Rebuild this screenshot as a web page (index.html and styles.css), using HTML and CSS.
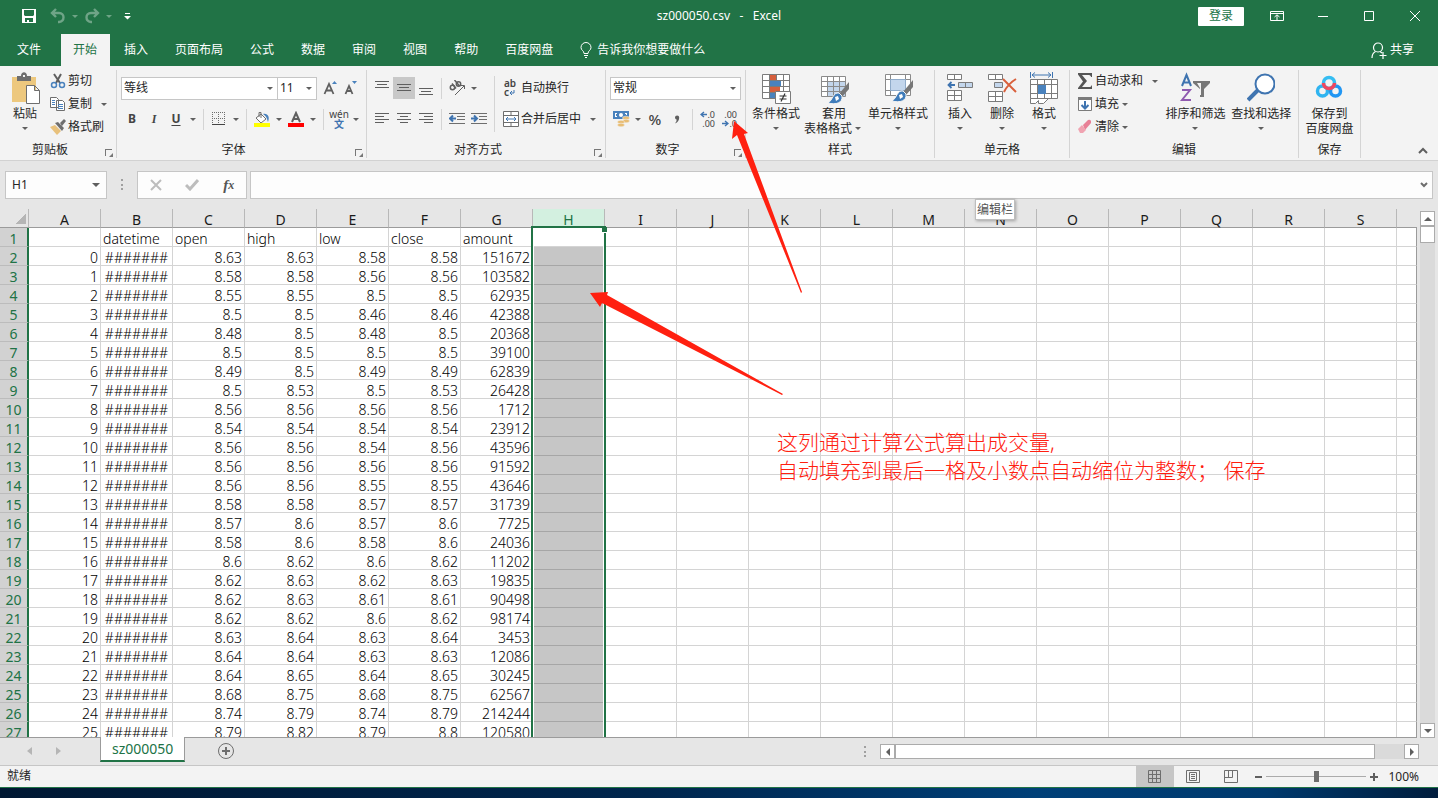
FILE: index.html
```html
<!DOCTYPE html>
<html lang="zh-CN">

  <head>
    <meta charset="UTF-8">
    <meta name="viewport" content="width=device-width, initial-scale=1.0">
    <title>sz000050.csv - Excel</title>
    <link rel="stylesheet" href="styles.css">
  </head>

  <body>

    <header class="titlebar">
      <div class="quick">
        <button class="quick__btn" aria-label="保存"><svg width="16" height="16" viewBox="0 0 16 16"><path fill="#fff" fill-rule="evenodd" d="M1 1h14v14H1zM3 2v5l1 1h8l1-1V2zM4 10v4h2v-2h2v2h4v-4z"/></svg></button>
        <button class="quick__btn dim" aria-label="撤消"><svg width="16" height="16" viewBox="0 0 16 16" fill="none" stroke="#fff" stroke-width="2.400"><path d="M6 1L2 5l4 4M2 5h7c6 0 6 8 0 9H8"/></svg></button>
        <i class="caret light dim"></i>
        <button class="quick__btn dim" aria-label="恢复"><svg width="16" height="16" viewBox="0 0 16 16" fill="none" stroke="#fff" stroke-width="2.400"><path d="M10 1l4 4-4 4M14 5H7c-6 0-6 8 0 9h1"/></svg></button>
        <i class="caret light dim"></i>
        <button class="quick__more" aria-label="自定义快速访问工具栏"><svg width="7" height="7" viewBox="0 0 7 7" fill="#fff"><path d="M1 0h5v1H1zM0 3h7L3.500 6.500z"/></svg></button>
      </div>
      <h1 class="titlebar__name">sz000050.csv&nbsp;&nbsp; -&nbsp;&nbsp; Excel</h1>
      <div class="window">
        <button class="login">登录</button>
        <button class="window__btn" aria-label="功能区显示选项"><svg width="14" height="12" viewBox="0 0 14 12" fill="none" stroke="#fff"><path d="M.5 1.500h13v9H.5zM.5 3.500h13M7 10V5M4.500 7L7 4.800 9.500 7"/></svg></button>
        <button class="window__btn" aria-label="最小化"><svg width="12" height="12" stroke="#fff"><path d="M1 6.500h10"/></svg></button>
        <button class="window__btn" aria-label="最大化"><svg width="12" height="12" fill="none" stroke="#fff"><path d="M1.500 1.500h9v9h-9z"/></svg></button>
        <button class="window__btn" aria-label="关闭"><svg width="12" height="12" stroke="#fff"><path d="M1 1l10 10M11 1L1 11"/></svg></button>
      </div>
    </header>

    <nav class="tabs">
      <button class="tab tab--file">文件</button>
      <button class="tab tab--active">开始</button>
      <button class="tab">插入</button>
      <button class="tab">页面布局</button>
      <button class="tab">公式</button>
      <button class="tab">数据</button>
      <button class="tab">审阅</button>
      <button class="tab">视图</button>
      <button class="tab">帮助</button>
      <button class="tab">百度网盘</button>
      <button class="tab tab--tell"><svg width="12" height="16" viewBox="0 0 12 16" fill="none" stroke="#fff"><path d="M4 11.500c0-3-3-3-3-6a5 5 0 0 1 10 0c0 3-3 3-3 6zM4 13.500h4M5 15.500h2"/></svg>告诉我你想要做什么</button>
      <button class="tab tab--share"><svg width="16" height="17" viewBox="0 0 16 17" fill="none" stroke="#fff" stroke-width="1.200"><circle cx="7" cy="5.500" r="4.500"/><path d="M4.500 9.500C2.500 10.500 1 13 1 16M9 9.500l2 1.500M12 10v7M8.500 13.500h7"/></svg>共享</button>
    </nav>

    <section class="ribbon">

      <div class="group group--clip">
        <div class="group__body">
          <button class="large large--paste">
            <svg width="30" height="32" viewBox="0 0 30 32"><path fill="#edc87e" d="M2 5h24v25H2z"/><path fill="#6e6e6e" d="M7 4h4c0-5 6-5 6 0h4v5H7z"/><path fill="#f3f3f3" d="M13 3h2v2h-2z"/><path fill="#fff" stroke="#6e6e6e" d="M16.500 13.500h8l5 5v13h-13zM24.500 13.500v5h5"/></svg>
            <span>粘贴</span><i class="caret"></i>
          </button>
          <div class="smalls">
            <button class="small"><svg width="16" height="16" viewBox="0 0 16 16" fill="none"><path stroke="#5f5f5f" stroke-width="2" d="M4 1l6 9M11 1L6 10"/><circle cx="4" cy="12" r="2.500" stroke="#4a82bd" stroke-width="1.500"/><circle cx="12" cy="12" r="2.500" stroke="#4a82bd" stroke-width="1.500"/></svg>剪切</button>
            <button class="small"><svg width="16" height="16" viewBox="0 0 16 16" fill="#fff" stroke="#6e6e6e"><path d="M.5 1.500h6l2 2v8h-8zM6.500 4.500h6l2 2v8h-8z"/><path stroke="#4a82bd" d="M2 4.500h3M2 6.500h3M2 8.500h3M8 8.500h5M8 10.500h5M8 12.500h5"/></svg>复制<i class="caret caret--far"></i></button>
            <button class="small"><svg width="16" height="16" viewBox="0 0 16 16"><path fill="#e8c17c" d="M0 8l5-2 6 6-4 4z"/><path fill="#6e6e6e" d="M5 4l3-1 6 6-2 3zM10 4l4-4 2 2-4 5z"/></svg>格式刷</button>
          </div>
        </div>
        <div class="group__name">剪贴板</div>
        <button class="launcher" aria-label="剪贴板设置"></button>
      </div>

      <div class="group group--font">
        <div class="rows">
          <div class="row">
            <label class="combo combo--font"><select aria-label="字体"><option>等线</option></select></label>
            <label class="combo combo--size"><select aria-label="字号"><option>11</option></select></label>
            <button class="tool grow" aria-label="增大字号"><svg width="16" height="16" viewBox="0 0 16 16"><path fill="none" stroke="#5f5f5f" stroke-width="1.800" d="M1.500 14L6 4l4.500 10M3 10.500h6"/><path fill="#4a82bd" d="M9 4l2.500-3L14 4z"/></svg></button>
            <button class="tool grow" aria-label="减小字号"><svg width="16" height="16" viewBox="0 0 16 16"><path fill="none" stroke="#5f5f5f" stroke-width="1.800" d="M2.500 14L6 6l3.500 8M3.500 11h5"/><path fill="#4a82bd" d="M9 1l2.500 3L14 1z"/></svg></button>
          </div>
          <div class="row">
            <button class="tool bold">B</button>
            <button class="tool italic">I</button>
            <button class="tool under">U</button>
            <i class="caret"></i>
            <i class="sep"></i>
            <button class="tool" aria-label="边框"><svg width="14" height="14" fill="none" stroke="#6e6e6e"><path stroke-dasharray="1 1" d="M0 .5h14M0 6.500h14M.5 0v13M6.500 0v13M12.500 0v13"/><path stroke="#444" d="M0 12.500h13"/></svg></button>
            <i class="caret"></i>
            <i class="sep"></i>
            <button class="tool" aria-label="填充颜色"><svg width="16" height="16" viewBox="0 0 16 16"><path fill="#fff" stroke="#6e6e6e" d="M2 7l5-4 5 5-5 4z"/><path fill="none" stroke="#6e6e6e" d="M5 6V1.500h2V7"/><path fill="#4a82bd" d="M9 3c5-1 7 3 5 8-1-3-1-5-5-8z"/><path fill="#ff0" d="M0 12h16v4H0z"/></svg></button>
            <i class="caret"></i>
            <button class="tool" aria-label="字体颜色"><svg width="16" height="16" viewBox="0 0 16 16"><path fill="none" stroke="#5f5f5f" stroke-width="2" d="M4 11L8 2l4 9M5 8h6"/><path fill="#f00" d="M0 12h16v4H0z"/></svg></button>
            <i class="caret"></i>
            <i class="sep"></i>
            <button class="tool pinyin"><span>wén</span><b>文</b></button>
            <i class="caret"></i>
          </div>
        </div>
        <div class="group__name">字体</div>
        <button class="launcher" aria-label="字体设置"></button>
      </div>

      <div class="group group--align">
        <div class="group__body">
          <div class="rows">
            <div class="row">
              <button class="tool" aria-label="顶端对齐"><svg width="14" height="14" stroke="#5f5f5f"><path d="M0 .5h14M2 3.500h10M0 6.500h14"/></svg></button>
              <button class="tool tool--on" aria-label="垂直居中"><svg width="14" height="14" stroke="#5f5f5f"><path d="M0 3.500h14M2 6.500h10M0 9.500h14"/></svg></button>
              <button class="tool" aria-label="底端对齐"><svg width="14" height="14" stroke="#5f5f5f"><path d="M0 7.500h14M2 10.500h10M0 13.500h14"/></svg></button>
              <i class="sep"></i>
              <button class="tool" aria-label="方向"><svg width="17" height="16" viewBox="0 0 17 16" fill="none" stroke="#5f5f5f" stroke-width="1.500"><circle cx="3.500" cy="7.500" r="2.200"/><path d="M3 3.500l4 5M5.500 0l5 6"/><circle cx="9.500" cy="4" r="2.200"/><path stroke-width="1" d="M6 15l9-9M12 5.500h3.500V9"/></svg></button>
              <i class="caret"></i>
            </div>
            <div class="row">
              <button class="tool" aria-label="左对齐"><svg width="14" height="14" stroke="#5f5f5f"><path d="M0 1.500h14M0 4.500h9M0 7.500h14M0 10.500h9"/></svg></button>
              <button class="tool" aria-label="居中"><svg width="14" height="14" stroke="#5f5f5f"><path d="M0 1.500h14M3 4.500h8M0 7.500h14M3 10.500h8"/></svg></button>
              <button class="tool" aria-label="右对齐"><svg width="14" height="14" stroke="#5f5f5f"><path d="M0 1.500h14M5 4.500h9M0 7.500h14M5 10.500h9"/></svg></button>
              <i class="sep"></i>
              <button class="tool" aria-label="减少缩进量"><svg width="16" height="14" stroke="#6e6e6e"><path d="M0 1.500h16M8 4.500h8M8 7.500h8M0 11.500h16"/><path fill="none" stroke="#3f74b0" stroke-width="2" d="M7 6.500H1M4 3.500l-3 3 3 3"/></svg></button>
              <button class="tool" aria-label="增加缩进量"><svg width="16" height="14" stroke="#6e6e6e"><path d="M0 1.500h16M8 4.500h8M8 7.500h8M0 11.500h16"/><path fill="none" stroke="#3f74b0" stroke-width="2" d="M0 6.500h6M3 3.500l3 3-3 3"/></svg></button>
            </div>
          </div>
          <i class="sep sep--tall"></i>
          <div class="rows">
            <div class="row">
              <button class="wide"><span class="wrapicon">ab<br>c<svg width="6" height="6" fill="none" stroke="#3f74b0"><path d="M5 0v3H1M3 1L1 3l2 2"/></svg></span>自动换行</button>
            </div>
            <div class="row">
              <button class="wide"><svg width="16" height="16" viewBox="0 0 16 16" fill="#fff" stroke="#6e6e6e"><path d="M.5.5h15v15H.5zM.5 4.500h15M.5 11.500h15M8 .5v4M8 11.500v4"/><path stroke="#3f74b0" fill="none" d="M3 8h10M5 6L3 8l2 2M11 6l2 2-2 2"/></svg>合并后居中</button>
              <i class="caret caret--far"></i>
            </div>
          </div>
        </div>
        <div class="group__name">对齐方式</div>
        <button class="launcher" aria-label="对齐设置"></button>
      </div>

      <div class="group group--number">
        <div class="rows">
          <div class="row">
            <label class="combo combo--format"><select aria-label="数字格式"><option>常规</option></select></label>
          </div>
          <div class="row">
            <button class="tool" aria-label="会计数字格式"><svg width="17" height="16" viewBox="0 0 17 16"><path fill="#4a82bd" d="M0 0h16v8H0z"/><path fill="#fff" d="M2 2h2v1H3v2h1v1H2zM14 2h-2v1h1v1h1z"/><circle cx="8" cy="4" r="2" fill="#fff"/><g fill="#e8bd74" stroke="#f3f3f3" stroke-width=".5"><ellipse cx="13" cy="7" rx="3.500" ry="1.800"/><ellipse cx="13" cy="10" rx="3.500" ry="1.800"/><ellipse cx="8" cy="11" rx="3.500" ry="1.800"/><ellipse cx="8" cy="14" rx="3.500" ry="1.800"/></g></svg></button>
            <i class="caret"></i>
            <button class="tool percent">%</button>
            <button class="tool" aria-label="千位分隔样式"><svg width="6" height="9" viewBox="0 0 6 9"><path fill="#5f5f5f" d="M1 2.500a2 2 0 0 1 4.200 0C5.200 5 4 7.500 1 8.500c1-1.200 1.600-2.400 1.600-4C1.600 4.400 1 3.500 1 2.500z"/></svg></button>
            <i class="sep"></i>
            <button class="tool decimals"><span><svg width="7" height="7" fill="none" stroke="#3f74b0" stroke-width="1.400"><path d="M7 3.500H1M4 1L1 3.500 4 6"/></svg>.0</span><span>.00</span></button>
            <button class="tool decimals"><span>.00</span><span><svg width="7" height="7" fill="none" stroke="#3f74b0" stroke-width="1.400"><path d="M0 3.500h6M3 1l3 2.500L3 6"/></svg>.0</span></button>
          </div>
        </div>
        <div class="group__name">数字</div>
        <button class="launcher" aria-label="数字设置"></button>
      </div>

      <div class="group group--styles">
        <div class="group__body">
          <button class="large">
            <svg width="30" height="32" viewBox="0 0 30 32"><path fill="#fff" stroke="#7b7b7b" d="M1.500 2.500h27v24h-27zM1.500 8.500h27M1.500 14.500h27M1.500 20.500h27M8.500 2.500v24M15.500 2.500v24M22.500 2.500v24"/><path fill="#d65f3c" d="M9 3h6v5H9zM9 15h10v5H9z"/><path fill="#4a82bd" d="M9 9h11v5H9zM9 21h5v5H9z"/><path fill="#fff" stroke="#7b7b7b" d="M14.500 19.500h15v12h-15z"/><path stroke="#333" stroke-width="1.200" d="M18.500 24h7M18.500 27h7M24 21.500l-4 8"/></svg>
            <span>条件格式</span><i class="caret"></i>
          </button>
          <button class="large large--two">
            <svg width="30" height="32" viewBox="0 0 30 32"><path fill="#fff" stroke="#8a8a8a" d="M2.500 4.500h24v20h-24z"/><path fill="#c3d6ec" d="M9 10h17v14H9z"/><path fill="none" stroke="#8a8a8a" d="M2.500 9.500h24M2.500 14.500h24M2.500 19.500h24M8.500 4.500v20M14.500 4.500v20M20.500 4.500v20"/><path fill="#777" d="M30 10v7l-7 8-3-3z"/><path fill="#3f7cba" stroke="#f3f3f3" d="M20 21c-6-1-6 7-11 10 8 2 15 0 14-7z"/><path fill="#fff" d="M16 25l3-1 1 3-3 2z"/></svg>
            <span>套用<br>表格格式<i class="caret"></i></span>
          </button>
          <button class="large">
            <svg width="30" height="32" viewBox="0 0 30 32"><path fill="#fff" stroke="#8a8a8a" d="M2.500 2.500h25v21h-25zM2.500 7.500h25M2.500 18.500h25M7.500 2.500v21M22.500 2.500v21"/><path fill="#c3d6ec" stroke="#8fabc9" d="M7.500 7.500h15v11h-15z"/><path fill="#777" d="M30 8v7l-7 8-3-3z"/><path fill="#3f7cba" stroke="#f3f3f3" d="M20 19c-6-1-6 7-11 10 8 2 15 0 14-7z"/><path fill="#fff" d="M16 23l3-1 1 3-3 2z"/></svg>
            <span>单元格样式</span><i class="caret"></i>
          </button>
        </div>
        <div class="group__name">样式</div>
      </div>

      <div class="group group--cells">
        <div class="group__body">
          <button class="large">
            <svg width="28" height="32" viewBox="0 0 28 32" fill="#fff" stroke="#7b7b7b"><path d="M1.500 2.500h14v5h-14zM8.500 2.500v5M1.500 18.500h14v10h-14zM1.500 23.500h14M8.500 18.500v10"/><path fill="#c3d6ec" d="M12.500 10.500h14v5h-14zM19.500 10.500v5"/><path fill="none" stroke="#3f74b0" stroke-width="1.800" d="M9 13H2.500M5.500 10L2.500 13l3 3"/></svg>
            <span>插入</span><i class="caret"></i>
          </button>
          <button class="large">
            <svg width="30" height="32" viewBox="0 0 30 32" fill="#fff" stroke="#7b7b7b"><path d="M1.500 2.500h14v5h-14zM8.500 2.500v5M1.500 19.500h14v10h-14zM1.500 24.500h14M8.500 19.500v10"/><path fill="#c3d6ec" d="M7.500 10.500h8v5h-8z"/><path fill="none" stroke="#d9603c" stroke-width="2" d="M16 7c4 4 8 8 13 13M29 7c-5 3-9 7-12 13"/></svg>
            <span>删除</span><i class="caret"></i>
          </button>
          <button class="large">
            <svg width="28" height="32" viewBox="0 0 28 32" fill="#fff" stroke="#7b7b7b"><path d="M.5 7.500h27v19H.5zM.5 12.500h27M.5 21.500h27M7.500 7.500v19M14.500 7.500v19M21.500 7.500v19M.5 26.500v5h5l3-3v3h5l5-5"/><path fill="#4a82bd" stroke="none" d="M8 13h8v9H8z"/><path fill="none" stroke="#3f74b0" d="M.5 0v6M22.500 0v6M2 3h19M5 .5L2 3l3 2.500M18 .5L21 3l-3 2.500"/></svg>
            <span>格式</span><i class="caret"></i>
          </button>
        </div>
        <div class="group__name">单元格</div>
      </div>

      <div class="group group--edit">
        <div class="group__body">
          <div class="smalls">
            <button class="small"><svg width="16" height="16" viewBox="0 0 16 16"><path fill="#555" d="M1 0h14v4h-1c0-1-1-2-2-2H5l5 6-5 6h8c1 0 1-1 2-2v4H1v-1l5-6.500L1 1.500z"/></svg>自动求和<i class="caret caret--far"></i></button>
            <button class="small"><svg width="16" height="16" viewBox="0 0 16 16"><path fill="#fff" stroke="#7b7b7b" d="M1.500 1.500h13v13h-13z"/><path fill="#7b7b7b" d="M1 1h14v3H1z"/><path fill="none" stroke="#3f74b0" stroke-width="2" d="M8 5v7M4.500 9L8 12.500 11.500 9"/></svg>填充<i class="caret"></i></button>
            <button class="small"><svg width="16" height="16" viewBox="0 0 16 16"><path fill="#e88096" d="M6 6l5-5q2-1 3 1v2L8 11z"/><path fill="#f0a3b1" d="M1 10l4-4 4 5-3 3H3z"/></svg>清除<i class="caret"></i></button>
          </div>
          <button class="large large--snug">
            <svg width="30" height="32" viewBox="0 0 30 32"><path fill="none" stroke="#3f74b0" stroke-width="2" d="M2 14L6.500 3 11 14M3.500 10.500h6"/><path fill="none" stroke="#8f5ab0" stroke-width="2" d="M2 18h8L2 28h9"/><path fill="#777" d="M13 9h17v2l-6 6v8h-4v-8l-7-6z"/><path fill="#f3f3f3" d="M17 11h4v12h-1v-7z"/></svg>
            <span>排序和筛选</span><i class="caret"></i>
          </button>
          <button class="large large--snug">
            <svg width="28" height="32" viewBox="0 0 28 32"><path stroke="#3f74b0" stroke-width="4" d="M1 28l10-10"/><circle cx="18" cy="12" r="9.500" fill="#fff" stroke="#3f74b0" stroke-width="2"/></svg>
            <span>查找和选择</span><i class="caret"></i>
          </button>
        </div>
        <div class="group__name">编辑</div>
      </div>

      <div class="group group--save">
        <div class="group__body">
          <button class="large">
            <svg width="28" height="32" viewBox="0 0 28 32" fill="none" stroke-width="3.500"><circle cx="7.500" cy="19" r="5" stroke="#2fb4f0"/><circle cx="20.500" cy="19" r="5" stroke="#2196f3"/><circle cx="14" cy="11" r="5.500" stroke="#35bdf2"/><path stroke="#f0475f" d="M8.500 11a5.500 5.500 0 0 0 11 0"/></svg>
            <span>保存到<br>百度网盘</span>
          </button>
        </div>
        <div class="group__name">保存</div>
      </div>

      <button class="collapse" aria-label="折叠功能区"><svg width="10" height="7" fill="none" stroke="#5f5f5f" stroke-width="2"><path d="M1 6l4-4 4 4"/></svg></button>
    </section>

    <section class="formula">
      <div class="namebox">
        <input type="text" value="H1" aria-label="名称框">
        <i class="caret caret--big"></i>
      </div>
      <i class="grip"></i>
      <div class="formula__btns">
        <button aria-label="取消"><svg width="12" height="12" stroke="#bdbdbd" stroke-width="2"><path d="M1 1l10 10M11 1L1 11"/></svg></button>
        <button aria-label="输入"><svg width="14" height="12" fill="none" stroke="#bdbdbd" stroke-width="3"><path d="M1 6l4 4 8-9"/></svg></button>
        <button class="fx">f<sub>x</sub></button>
      </div>
      <div class="formula__input">
        <input type="text" aria-label="编辑栏">
        <svg width="8" height="6" fill="none" stroke="#6e6e6e" stroke-width="2"><path d="M1 1l3 3 3-3"/></svg>
      </div>
      <div class="tooltip">编辑栏</div>
    </section>

    <main class="work">
      <div class="sheet">
        <table class="grid">
          <colgroup id="cols"></colgroup>
          <thead id="head"></thead>
          <tbody id="rows"></tbody>
        </table>
        <div class="selection"></div>
      </div>
      <div class="vscroll">
        <button class="scrollbtn" aria-label="向上"><i class="caret caret--up"></i></button>
        <div class="vscroll__thumb"></div>
        <div class="vscroll__track"></div>
        <button class="scrollbtn" aria-label="向下"><i class="caret caret--big"></i></button>
      </div>
    </main>

    <div class="sheetbar">
      <div class="sheetbar__nav">
        <svg width="5" height="8" fill="#b5b5b5"><path d="M5 0v8L0 4z"/></svg>
        <svg width="5" height="8" fill="#b5b5b5"><path d="M0 0v8l5-4z"/></svg>
      </div>
      <button class="sheetbar__tab">sz000050</button>
      <button class="sheetbar__add" aria-label="新工作表"><svg width="18" height="18" viewBox="0 0 18 18" fill="none" stroke="#6e6e6e"><circle cx="9" cy="9" r="7.500"/><path stroke-width="2" d="M9 5v8M5 9h8"/></svg></button>
      <i class="grip"></i>
      <div class="hscroll">
        <button class="scrollbtn" aria-label="向左"><svg width="4" height="8" fill="#5f5f5f"><path d="M4 0v8L0 4z"/></svg></button>
        <div class="hscroll__thumb"></div>
        <div class="hscroll__track"></div>
        <button class="scrollbtn" aria-label="向右"><svg width="4" height="8" fill="#5f5f5f"><path d="M0 0v8l4-4z"/></svg></button>
      </div>
    </div>

    <footer class="status">
      <span class="status__text">就绪</span>
      <button class="view view--on" aria-label="普通"><svg width="14" height="14" fill="none" stroke="#6e6e6e"><path d="M.5.5h12v12H.5zM.5 4.500h12M.5 8.500h12M4.500.5v12M8.500.5v12"/></svg></button>
      <button class="view" aria-label="页面布局"><svg width="14" height="14" fill="none" stroke="#6e6e6e"><path d="M.5.5h13v12H.5zM3.500 2.500h7v8h-7zM5 4.500h4M5 6.500h4M5 8.500h4"/></svg></button>
      <button class="view" aria-label="分页预览"><svg width="14" height="14" fill="none" stroke="#6e6e6e"><path d="M.5.5h13v12H.5zM.5 7.500h8v-7M4.500.5v7"/></svg></button>
      <div class="zoom">
        <button aria-label="缩小"><svg width="7" height="7" fill="#5f5f5f"><path d="M0 3h7v2H0z"/></svg></button>
        <input type="range" min="0" max="100" value="50" aria-label="缩放">
        <button aria-label="放大"><svg width="8" height="8" fill="#5f5f5f"><path d="M0 3h3V0h2v3h3v2H5v3H3V5H0z"/></svg></button>
        <span>100%</span>
      </div>
    </footer>

    <div class="desktop"></div>

    <svg class="arrows" width="1000" height="420" fill="#ff2010">
      <path d="M734 121l14 12-4 1 58 158-1 1-64-158-5 4z"/>
      <path d="M590 293l18-1-1 3 176 99-1 1-180-92-2 4z"/>
    </svg>
    <p class="note">这列通过计算公式算出成交量,<br>自动填充到最后一格及小数点自动缩位为整数； 保存</p>

    <script src="script.js"></script>
  </body>

</html>
```
FILE: styles.css
```css
* {
  margin: 0;
  padding: 0;
  box-sizing: border-box;
}

body {
  display: flex;
  flex-direction: column;
  position: relative;
  height: 100vh;
  overflow: hidden;
  background: #e6e6e6;
  color: #262626;
  font: 12px/16px "Noto Sans", "Noto Sans CJK SC", sans-serif;
}

button,
input,
select {
  border: none;
  background: none;
  color: inherit;
  font: inherit;
}

svg {
  flex: none;
}

.caret {
  flex: none;
  width: 12px;
  height: 15px;
  display: inline-flex;
  align-items: center;
  justify-content: center;
}

.caret::after {
  content: "";
  border: 3px solid transparent;
  border-top-color: #5f5f5f;
  border-bottom: none;
}

.caret--big::after {
  border-width: 4px;
  border-bottom: none;
}

.caret--up::after {
  border: 4px solid transparent;
  border-bottom-color: #5f5f5f;
  border-top: none;
}

.caret--far {
  margin-left: 6px;
}

.light::after {
  border-top-color: #fff;
}

.dim {
  opacity: 0.35;
}

/* title bar */
.titlebar {
  display: grid;
  grid-template-columns: 1fr auto 1fr;
  align-items: center;
  height: 34px;
  padding-bottom: 2px;
  background: #217346;
  color: #fff;
}

.quick {
  display: flex;
  align-items: center;
  padding-left: 18px;
}

.quick__btn {
  display: flex;
  width: 22px;
  justify-content: center;
}

.quick__btn + .quick__btn {
  margin-left: 7px;
}

.quick__more {
  display: flex;
  margin-left: 9px;
}

.titlebar__name {
  font-size: 12px;
  font-weight: 400;
}

.window {
  display: flex;
  justify-content: flex-end;
  align-items: center;
}

.login {
  width: 46px;
  height: 19px;
  margin-right: 10px;
  border-radius: 1px;
  background: #fff;
  color: #217346;
}

.window__btn {
  display: flex;
  justify-content: center;
  width: 46px;
}

/* ribbon tabs */
.tabs {
  display: flex;
  height: 32px;
  background: #217346;
  color: #fff;
}

.tab {
  display: flex;
  align-items: center;
  padding: 0 13px 0 14px;
}

.tab--file {
  padding: 0 20px 0 17px;
}

.tab--active {
  padding: 0 13px 0 12px;
  background: #f3f3f3;
  color: #217346;
}

.tab--tell {
  gap: 5px;
}

.tab--share {
  gap: 3px;
  margin-left: auto;
  padding-right: 24px;
}

/* ribbon */
.ribbon {
  display: flex;
  height: 95px;
  padding: 4px 0 2px;
  border-bottom: 1px solid #d2d2d2;
  background: #f3f3f3;
}

.group {
  display: flex;
  flex-direction: column;
  position: relative;
  padding: 0 4px;
  border-right: 1px solid #d4d4d4;
}

.group--clip {
  width: 117px;
}

.group--font {
  width: 250px;
}

.group--align {
  width: 239px;
}

.group--number {
  width: 140px;
}

.group--styles {
  width: 189px;
  padding: 0 2px;
}

.group--cells {
  width: 135px;
}

.group--edit {
  width: 229px;
}

.group--save {
  width: 62px;
  padding: 0 2px;
}

.group__body {
  display: flex;
  flex: 1;
}

.group__name {
  margin-top: auto;
  padding-right: 16px;
  text-align: center;
}

.group--styles .group__name,
.group--cells .group__name,
.group--edit .group__name,
.group--save .group__name {
  padding-right: 0;
}

.launcher {
  position: absolute;
  right: 4px;
  bottom: 2px;
  width: 7px;
  height: 7px;
  border-top: 1px solid #777;
  border-left: 1px solid #777;
}

.launcher::after {
  content: "";
  position: absolute;
  right: -1px;
  bottom: -1px;
  border: 2px solid #777;
  border-top-color: transparent;
  border-left-color: transparent;
}

.large {
  display: flex;
  flex-direction: column;
  align-items: center;
  min-width: 42px;
  padding: 2px 4px 0;
  line-height: 15px;
  white-space: nowrap;
}

.large svg {
  margin-bottom: 2px;
}

.large--paste {
  margin-right: 1px;
}

.large--two {
  padding: 2px 0 0;
}

.large--two .caret {
  vertical-align: top;
}

.large--snug {
  padding: 2px 3px 0;
}

.group--save .large {
  margin: 0 auto;
}

.smalls {
  display: flex;
  flex-direction: column;
  gap: 1px;
}

.group--edit .smalls {
  width: 89px;
}

.small {
  display: flex;
  align-items: center;
  height: 22px;
  padding-left: 3px;
  white-space: nowrap;
}

.small svg {
  margin-right: 2px;
}

.rows {
  display: flex;
  flex-direction: column;
  gap: 9px;
  padding-top: 7px;
}

.row {
  display: flex;
  align-items: center;
  height: 22px;
}

.sep {
  width: 1px;
  height: 21px;
  margin: 0 4px;
  background: #d4d4d4;
}

.sep--tall {
  height: 56px;
  margin-top: 6px;
}

.tool {
  display: flex;
  align-items: center;
  justify-content: center;
  width: 22px;
  height: 22px;
  color: #444;
}

.tool--on {
  background: #c8c8c8;
}

.bold,
.italic,
.under {
  font-size: 12px;
  font-weight: 700;
}

.italic {
  font-family: "Liberation Serif", serif;
  font-style: italic;
}

.under {
  text-decoration: underline;
  text-underline-offset: 2px;
}

.percent {
  font-size: 15px;
  font-weight: 500;
}

.pinyin {
  flex-direction: column;
  font-size: 10px;
  line-height: 10px;
}

.pinyin b {
  color: #3f74b0;
}

.decimals {
  flex-direction: column;
  align-items: flex-end;
  padding-right: 4px;
  font-size: 9px;
  line-height: 9px;
}

.wide {
  display: flex;
  align-items: center;
  gap: 2px;
  padding-left: 4px;
  white-space: nowrap;
}

.wrapicon {
  width: 16px;
  padding-left: 1px;
  color: #444;
  font-size: 10px;
  font-weight: 600;
  line-height: 9px;
  text-align: left;
}

.combo {
  display: flex;
  flex: none;
  position: relative;
  height: 23px;
  border: 1px solid #c6c6c6;
  background: #fff;
}

.combo::after {
  content: "";
  position: absolute;
  top: 9px;
  right: 4px;
  border: 3px solid transparent;
  border-top-color: #5f5f5f;
  border-bottom: none;
  pointer-events: none;
}

.combo select {
  width: 100%;
  padding-left: 2px;
  appearance: none;
}

.combo--font {
  width: 157px;
}

.combo--size {
  width: 40px;
  margin-left: -1px;
}

.combo--format {
  width: 131px;
}

.grow {
  width: 20px;
}

.combo + .grow {
  margin-left: 4px;
}

.collapse {
  align-self: flex-end;
  margin-left: auto;
  padding-right: 10px;
}

/* formula bar */
.formula {
  display: flex;
  position: relative;
  height: 48px;
  padding: 10px 5px;
}

.namebox,
.formula__btns,
.formula__input {
  display: flex;
  align-items: center;
  height: 28px;
  border: 1px solid #c6c6c6;
  background: #fdfdfd;
}

.namebox {
  width: 102px;
  padding: 0 4px 0 6px;
}

.namebox input {
  width: 100%;
  min-width: 0;
}

.grip {
  width: 3px;
  height: 11px;
  margin: 8px 13px 0 14px;
  border-left: 2px dotted #a0a0a0;
}

.formula__btns {
  width: 110px;
  justify-content: space-around;
}

.formula__btns button {
  display: flex;
}

.fx {
  color: #555;
  font: italic bold 15px/16px "Liberation Serif", serif;
}

.fx sub {
  font-size: 12px;
}

.formula__input {
  flex: 1;
  margin-left: 3px;
  padding: 0 4px;
}

.formula__input input {
  flex: 1;
}

.tooltip {
  position: absolute;
  z-index: 2;
  top: 38px;
  left: 975px;
  height: 21px;
  padding: 2px 1px;
  border: 1px solid #bebebe;
  background: #fff;
  box-shadow: 1px 1px 3px rgba(0, 0, 0, 0.3);
  color: #555;
}

/* sheet */
.work {
  display: flex;
  flex: 1;
  gap: 3px;
  min-height: 0;
  padding-right: 3px;
}

.sheet {
  position: relative;
  flex: 1;
  overflow: hidden;
  border-bottom: 1px solid #9b9b9b;
}

.grid {
  width: 100%;
  table-layout: fixed;
  border-spacing: 0;
  font-size: 14px;
  line-height: 15px;
}

.col-num {
  width: 29px;
}

.col {
  width: 72px;
}

.grid th,
.grid td {
  height: 19px;
  padding: 3px 2px 0;
}

.grid th {
  padding: 3px 0 0;
  font-weight: 400;
}

.grid thead th {
  border-right: 1px solid #b8b8b8;
  border-bottom: 1px solid #9b9b9b;
  background: #e6e6e6;
  color: #1a1a1a;
}

.grid thead th:last-child {
  border-right: none;
}

.grid thead .picked {
  background: #d3f0e0;
  color: #217346;
}

.grid .corner {
  background: linear-gradient(135deg, transparent 50%, #b5b5b5 50%) 15px 4px / 11px 11px no-repeat #e6e6e6;
}

.grid tbody th {
  border-right: 2px solid #217346;
  border-bottom: 1px solid #bcbcbc;
  background: #d2d2d2;
  color: #217346;
}

.grid td {
  border-right: 1px solid #d4d4d4;
  border-bottom: 1px solid #d4d4d4;
  background: #fff;
  color: #000;
  font-weight: 300;
  text-align: right;
  white-space: nowrap;
}

.grid td:last-child {
  border-right-color: #9b9b9b;
}

.grid .text {
  text-align: left;
}

.grid .hash {
  text-align: center;
}

.grid .fill {
  border-bottom-color: #a6a6a6;
  background: #c6c6c6;
}

.selection {
  position: absolute;
  top: 17px;
  bottom: -4px;
  left: 531px;
  width: 75px;
  border: 2px solid #217346;
  box-shadow: inset 1px 0 #fff, inset -1px 0 #fff;
}

.selection::after {
  content: "";
  position: absolute;
  top: -1px;
  right: -3px;
  width: 5px;
  height: 5px;
  background: #217346;
  box-shadow: 0 1px #fff;
}

.vscroll {
  display: flex;
  flex-direction: column;
  width: 15px;
  padding-top: 2px;
}

.scrollbtn {
  display: flex;
  flex: none;
  align-items: center;
  justify-content: center;
  width: 15px;
  height: 15px;
  border: 1px solid #ababab;
  background: #fff;
}

.vscroll__thumb {
  height: 17px;
  border: 1px solid #ababab;
  background: #fff;
}

.vscroll__track {
  flex: 1;
  background: #dadada;
}

/* sheet tabs and horizontal scroll */
.sheetbar {
  display: flex;
  height: 28px;
  padding-right: 19px;
  border-bottom: 1px solid #c6c6c6;
}

.sheetbar__nav {
  display: flex;
  gap: 24px;
  width: 100px;
  padding: 9px 0 0 27px;
}

.sheetbar__tab {
  z-index: 1;
  height: 25px;
  margin-top: -1px;
  padding: 0 11px;
  border: 1px solid #9b9b9b;
  border-top: none;
  border-bottom: 2px solid #217346;
  background: #fff;
  color: #217346;
  font-size: 14px;
}

.sheetbar__add {
  align-self: flex-start;
  display: flex;
  margin: 4px auto 0 32px;
}

.hscroll {
  display: flex;
  width: 539px;
  padding-top: 6px;
}

.hscroll__thumb {
  width: 480px;
  height: 15px;
  border: 1px solid #ababab;
  background: #fff;
}

.hscroll__track {
  flex: 1;
  height: 15px;
  background: #dadada;
}

/* status bar */
.status {
  display: flex;
  height: 22px;
  border-bottom: 1px solid #217346;
  background: #f3f3f3;
}

.status__text {
  margin-right: auto;
  padding: 2px 0 0 7px;
}

.view {
  display: flex;
  align-items: center;
  justify-content: center;
  width: 38px;
}

.view--on {
  background: #c6c6c6;
}

.zoom {
  display: flex;
  align-items: center;
  padding: 0 19px 0 5px;
}

.zoom button {
  display: flex;
}

.zoom input {
  width: 100px;
  height: 12px;
  margin: 0 4px;
  background: linear-gradient(#ababab, #ababab) center / 100% 1px no-repeat;
  appearance: none;
}

.zoom input::-webkit-slider-thumb {
  width: 5px;
  height: 11px;
  background: #6e6e6e;
  appearance: none;
}

.zoom span {
  margin-left: 10px;
}

.desktop {
  height: 10px;
  background: linear-gradient(90deg, #001833, #00264d 45%, #004078 72%, #003a6e 88%, #001d3d);
}

/* red annotations over the window */
.arrows {
  position: absolute;
  z-index: 3;
  top: 0;
  left: 0;
  pointer-events: none;
}

.note {
  position: absolute;
  z-index: 3;
  top: 428px;
  left: 777px;
  color: #ff2010;
  font-size: 21px;
  font-weight: 300;
  line-height: 28px;
  white-space: nowrap;
}
```
FILE: script.js
```js
const letters = 'ABCDEFGHIJKLMNOPQRS'.split('');
const titles = ['', 'datetime', 'open', 'high', 'low', 'close', 'amount'];

// open, high, low, close, amount
const data = [
  [8.63, 8.63, 8.58, 8.58, 151672],
  [8.58, 8.58, 8.56, 8.56, 103582],
  [8.55, 8.55, 8.5, 8.5, 62935],
  [8.5, 8.5, 8.46, 8.46, 42388],
  [8.48, 8.5, 8.48, 8.5, 20368],
  [8.5, 8.5, 8.5, 8.5, 39100],
  [8.49, 8.5, 8.49, 8.49, 62839],
  [8.5, 8.53, 8.5, 8.53, 26428],
  [8.56, 8.56, 8.56, 8.56, 1712],
  [8.54, 8.54, 8.54, 8.54, 23912],
  [8.56, 8.56, 8.54, 8.56, 43596],
  [8.56, 8.56, 8.56, 8.56, 91592],
  [8.56, 8.56, 8.55, 8.55, 43646],
  [8.58, 8.58, 8.57, 8.57, 31739],
  [8.57, 8.6, 8.57, 8.6, 7725],
  [8.58, 8.6, 8.58, 8.6, 24036],
  [8.6, 8.62, 8.6, 8.62, 11202],
  [8.62, 8.63, 8.62, 8.63, 19835],
  [8.62, 8.63, 8.61, 8.61, 90498],
  [8.62, 8.62, 8.6, 8.62, 98174],
  [8.63, 8.64, 8.63, 8.64, 3453],
  [8.64, 8.64, 8.63, 8.63, 12086],
  [8.64, 8.65, 8.64, 8.65, 30245],
  [8.68, 8.75, 8.68, 8.75, 62567],
  [8.74, 8.79, 8.74, 8.79, 214244],
  [8.79, 8.82, 8.79, 8.8, 120580]
];

const empty = '<td></td>'.repeat(12);

document.getElementById('cols').innerHTML =
  '<col class="col-num">' + '<col class="col">'.repeat(letters.length) + '<col>';

document.getElementById('head').innerHTML = `<tr>
  <th class="corner"></th>
  ${letters.map(l => `<th scope="col"${l === 'H' ? ' class="picked"' : ''}>${l}</th>`).join('')}
  <th></th>
  </tr>`;

let rows = `<tr>
  <th scope="row">1</th>
  ${titles.map(t => `<td class="text">${t}</td>`).join('')}
  <td></td>${empty}
  </tr>`;

data.forEach((row, i) => {
  rows += `<tr>
    <th scope="row">${i + 2}</th>
    <td>${i}</td>
    <td class="hash">#######</td>
    ${row.map(v => `<td>${v}</td>`).join('')}
    <td class="fill"></td>${empty}
    </tr>`;
});

document.getElementById('rows').innerHTML = rows;
```
